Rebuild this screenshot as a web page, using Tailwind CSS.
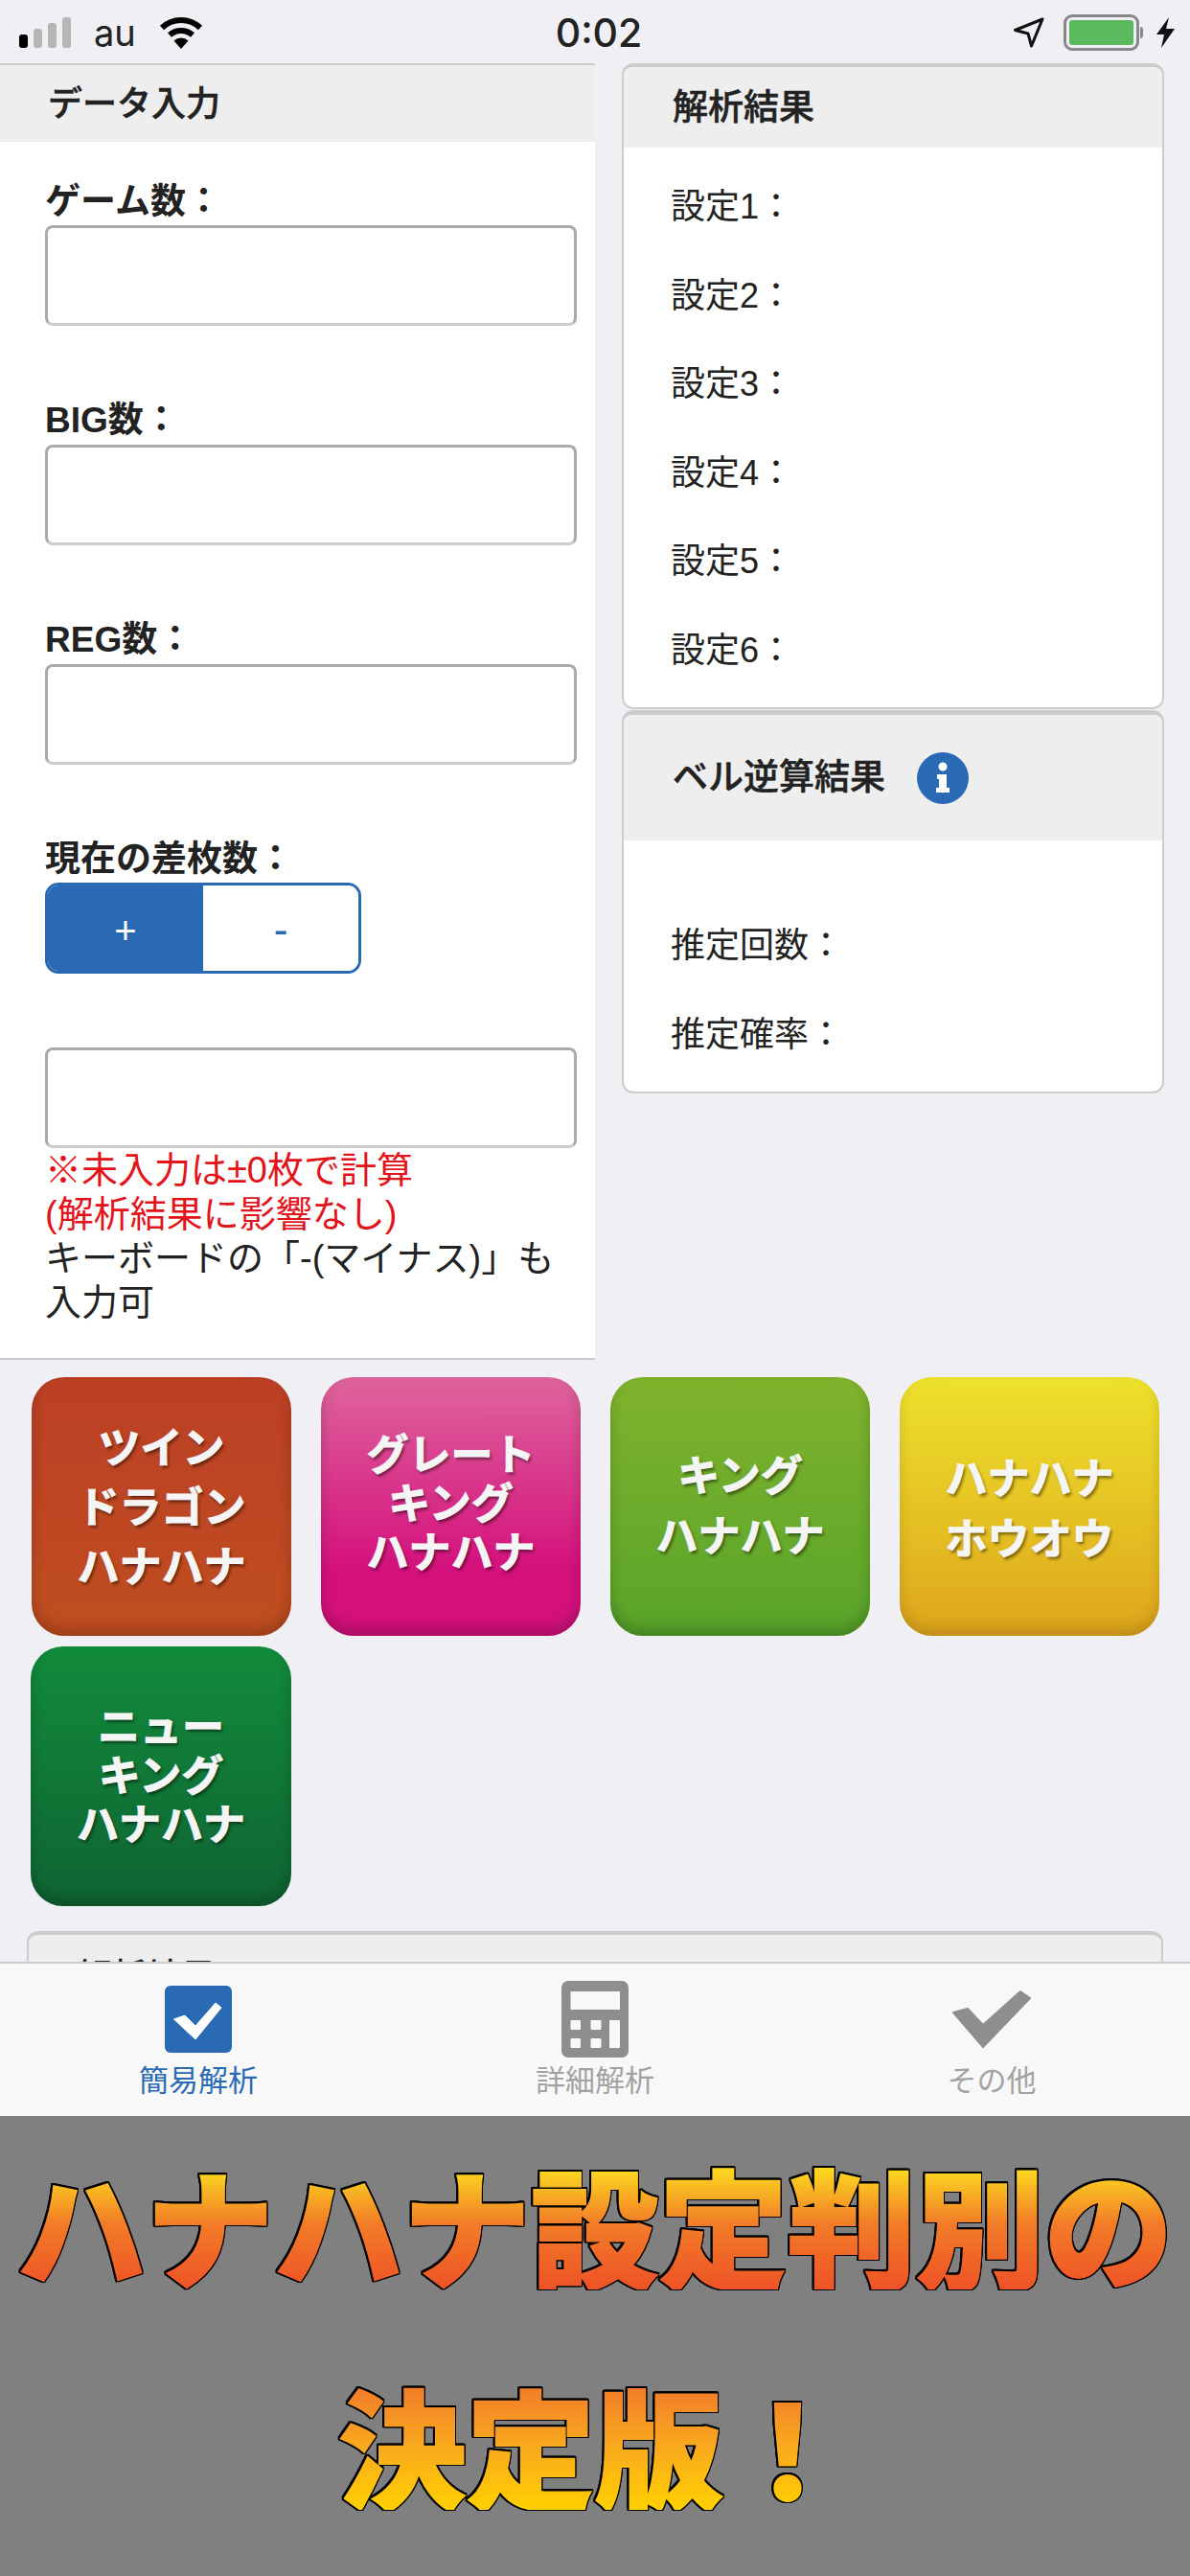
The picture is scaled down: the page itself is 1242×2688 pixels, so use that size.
<!DOCTYPE html>
<html lang="ja">
<head>
  <meta charset="UTF-8" />
  <title>ハナハナ設定判別</title>
  <meta name="viewport" content="width=device-width, initial-scale=1.0">
  <script src="https://cdn.jsdelivr.net/npm/@tailwindcss/browser@4"></script>
</head>
<body class="bg-[#efeff4] font-['Liberation_Sans','Noto_Sans_CJK_JP',sans-serif] text-[#222]">
<div class="w-[1242px] h-[2688px] flex flex-col overflow-hidden">

  <!-- status bar -->
  <div class="h-[66px] shrink-0 grid grid-cols-3 items-center pt-[2px]">
    <div class="flex items-center pl-[20px]">
      <div class="flex items-end gap-[6px] h-[32px]">
        <div class="w-[9px] h-[14px] rounded-[3px] bg-black"></div>
        <div class="w-[9px] h-[20px] rounded-[3px] bg-[#b5b5b5]"></div>
        <div class="w-[9px] h-[26px] rounded-[3px] bg-[#b5b5b5]"></div>
        <div class="w-[9px] h-[32px] rounded-[3px] bg-[#b5b5b5]"></div>
      </div>
      <span class="ml-[24px] text-[38px] leading-none font-['Inter',sans-serif]">au</span>
      <svg class="ml-[24px]" width="46" height="33" viewBox="0 0 46 33">
        <path d="M3 11A29 29 0 0 1 43 11" fill="none" stroke="#000" stroke-width="6"/>
        <path d="M11 18.5A18 18 0 0 1 35 18.5" fill="none" stroke="#000" stroke-width="6"/>
        <path d="M23 33L15.5 24.5A11 11 0 0 1 30.5 24.5Z" fill="#000"/>
      </svg>
    </div>
    <div class="text-center pl-[8px] text-[41px] leading-none font-medium font-['Inter',sans-serif]">0:02</div>
    <div class="flex items-center justify-end pr-[16px]">
      <svg width="32" height="32" viewBox="0 0 32 32">
        <path d="M30 2L1.5 13.5L15 17L18.5 30Z" fill="none" stroke="#111" stroke-width="3" stroke-linejoin="round"/>
      </svg>
      <div class="ml-[20px] w-[79px] h-[38px] border-[3px] border-[#888] rounded-[9px] p-[3px]">
        <div class="w-full h-full bg-[#5cb85c] rounded-[3px]"></div>
      </div>
      <div class="w-[3px] h-[12px] bg-[#888] rounded-r-[3px] ml-[1px]"></div>
      <svg class="ml-[14px]" width="19" height="32" viewBox="0 0 19 32">
        <path d="M13 0L0 18H8L5 32L19 12H10Z" fill="#111"/>
      </svg>
    </div>
  </div>

  <!-- scrolling content, clipped by the tab bar -->
  <div class="h-[981px] grow overflow-hidden">
    <div class="flex items-start">

      <!-- data input -->
      <div class="w-[621px] bg-white border-t-2 border-b-2 border-[#ccc] shrink-0">
        <div class="h-[80px] bg-[#eeeeee] flex items-center pl-[50px] pt-[2px] text-[36px] font-medium [-webkit-text-stroke:0.5px_#222]">データ入力</div>
        <div class="pt-[40px] pb-[35px] px-[47px]">
          <div class="h-[46px] mb-[1px] text-[37px] leading-[46px] font-bold">ゲーム数：</div>
          <input type="text" class="block w-[555px] h-[105px] mb-[76px] bg-white border-[3px] border-[#aaa] border-b-[#ccc] rounded-lg" />
          <div class="h-[46px] mb-[2px] text-[37px] leading-[46px] font-bold">BIG数：</div>
          <input type="text" class="block w-[555px] h-[105px] mb-[76px] bg-white border-[3px] border-[#aaa] border-b-[#ccc] rounded-lg" />
          <div class="h-[46px] mb-[2px] text-[37px] leading-[46px] font-bold">REG数：</div>
          <input type="text" class="block w-[555px] h-[105px] mb-[76px] bg-white border-[3px] border-[#aaa] border-b-[#ccc] rounded-lg" />
          <div class="h-[46px] mb-[1px] text-[37px] leading-[46px] font-bold">現在の差枚数：</div>
          <div class="w-[330px] h-[95px] flex border-[3px] border-[#2a6ab5] rounded-[14px] overflow-hidden mb-[77px]">
            <div class="w-[162px] bg-[#2a6ab5] text-white flex items-center justify-center text-[40px] pt-[4px]">+</div>
            <div class="grow bg-white text-[#2a6ab5] flex items-center justify-center text-[44px] pt-[2px]">-</div>
          </div>
          <input type="text" class="block w-[555px] h-[105px] bg-white border-[3px] border-[#aaa] border-b-[#ccc] rounded-lg" />
          <div class="text-[38px] leading-[46px] text-[#e3131b] whitespace-nowrap">※未入力は±0枚で計算<br>(解析結果に影響なし)</div>
          <div class="text-[38px] leading-[46px] whitespace-nowrap">キーボードの「-(マイナス)」も<br>入力可</div>
        </div>
      </div>

      <!-- results -->
      <div class="w-[566px] ml-[28px] shrink-0">
        <div class="bg-white border-2 border-t-4 border-[#ccc] rounded-xl overflow-hidden">
          <div class="h-[84px] bg-[#eeeeee] flex items-center pl-[51px] pt-[1px] text-[37px] font-medium [-webkit-text-stroke:0.5px_#222]">解析結果</div>
          <div class="pt-[16px] pb-[13px] pl-[49px] text-[36px] leading-[92.5px]">
            <div>設定1：</div>
            <div>設定2：</div>
            <div>設定3：</div>
            <div>設定4：</div>
            <div>設定5：</div>
            <div>設定6：</div>
          </div>
        </div>
        <div class="mt-[1px] bg-white border-2 border-t-[5px] border-[#ccc] rounded-xl overflow-hidden">
          <div class="h-[131px] bg-[#eeeeee] flex items-center pl-[51px] text-[37px] font-medium [-webkit-text-stroke:0.5px_#222]">
            ベル逆算結果
            <svg class="ml-[33px]" width="54" height="54" viewBox="0 0 54 54">
              <circle cx="27" cy="27" r="27" fill="#2a6ab5"/>
              <circle cx="27" cy="15" r="4.5" fill="#fff"/>
              <path d="M21 23H31V37H34V42H20V37H23V28H21Z" fill="#fff"/>
            </svg>
          </div>
          <div class="pt-[64px] pb-[13px] pl-[49px] text-[36px] leading-[92.5px]">
            <div>推定回数：</div>
            <div>推定確率：</div>
          </div>
        </div>
      </div>
    </div>

    <!-- machine buttons -->
    <div class="grid grid-cols-[repeat(4,271px)] gap-x-[31px] gap-y-[11px] pl-[33px] pt-[18px] text-center text-[#f5f5f5] text-[44px] font-bold [-webkit-text-stroke:1px_#f5f5f5] [text-shadow:2px_3px_3px_rgba(0,0,0,0.45)]">
      <div class="h-[270px] rounded-[34px] flex items-center justify-center leading-[62px] pt-[3px] bg-[linear-gradient(#bb3f26,#c04e1f)] shadow-[inset_0_-8px_14px_rgba(0,0,0,0.2)]">ツイン<br>ドラゴン<br>ハナハナ</div>
      <div class="h-[270px] rounded-[34px] flex items-center justify-center leading-[51px] pb-[5px] bg-[linear-gradient(#de649c,#d4107c_75%)] shadow-[inset_0_-8px_14px_rgba(0,0,0,0.2)]">グレート<br>キング<br>ハナハナ</div>
      <div class="h-[270px] rounded-[34px] flex items-center justify-center leading-[63px] bg-[linear-gradient(#80b32c,#58a42a)] shadow-[inset_0_-8px_14px_rgba(0,0,0,0.2)]">キング<br>ハナハナ</div>
      <div class="h-[270px] rounded-[34px] flex items-center justify-center leading-[63px] pt-[6px] bg-[linear-gradient(#ede22c,#dea51c)] shadow-[inset_0_-8px_14px_rgba(0,0,0,0.14)]">ハナハナ<br>ホウオウ</div>
      <div class="h-[271px] -ml-[1px] rounded-[34px] flex items-center justify-center leading-[51px] bg-[linear-gradient(#128b3b,#0f6433)] shadow-[inset_0_-8px_14px_rgba(0,0,0,0.2)]">ニュー<br>キング<br>ハナハナ</div>
    </div>

    <!-- next card, cut off by the tab bar -->
    <div class="mt-[26px] ml-[28px] w-[1186px] h-[200px] border-2 border-t-4 border-[#ccc] rounded-xl bg-[#eeeeee] pt-[17px] pl-[51px] text-[36px] font-medium">解析結果</div>
  </div>

  <!-- tab bar -->
  <div class="h-[161px] shrink-0 bg-[#f8f8f8] border-t-2 border-[#ccc] grid grid-cols-3 pt-[18px] text-[31px] leading-[40px] text-[#a2a2a2]">
    <div class="flex flex-col items-center text-[#2a6ab5]">
      <div class="h-[80px] flex items-center">
        <svg width="70" height="70" viewBox="0 0 70 70">
          <rect width="70" height="70" rx="6" fill="#2a6ab5"/>
          <path d="M9.5 35L21 31L32 42L53 18L59 23L32 56Z" fill="#fff" stroke="#fff" stroke-width="1" stroke-linejoin="round"/>
        </svg>
      </div>
      <div class="mt-[5px]">簡易解析</div>
    </div>
    <div class="flex flex-col items-center">
      <div class="h-[80px] flex items-center">
        <svg width="70" height="80" viewBox="0 0 70 80">
          <rect width="70" height="80" rx="7" fill="#8e8e8e"/>
          <g fill="#f8f8f8">
            <rect x="9.5" y="11" width="51.5" height="19"/>
            <rect x="9.5" y="41" width="10.5" height="10" rx="1"/>
            <rect x="30.5" y="41" width="11" height="10" rx="1"/>
            <rect x="50" y="41" width="11" height="29" rx="1"/>
            <rect x="9.5" y="60" width="10.5" height="10" rx="1"/>
            <rect x="30.5" y="60" width="11" height="10" rx="1"/>
          </g>
        </svg>
      </div>
      <div class="mt-[5px]">詳細解析</div>
    </div>
    <div class="flex flex-col items-center">
      <div class="h-[80px] flex items-center">
        <svg width="82" height="60" viewBox="0 0 82 60">
          <path d="M1 23L16 19L32 36L71 1L81 8L32 59Z" fill="#8e8e8e" stroke="#8e8e8e" stroke-width="2" stroke-linejoin="round"/>
        </svg>
      </div>
      <div class="mt-[5px]">その他</div>
    </div>
  </div>

  <!-- banner -->
  <div class="h-[480px] shrink-0 bg-[#808080] flex flex-col items-center gap-[92px] pt-[43px] text-[134px] leading-[138px] font-black whitespace-nowrap font-['Noto_Sans_CJK_JP',sans-serif]">
    <div class="px-[8px] bg-[linear-gradient(#ffee1e,#f27c28_50%,#ee5227)] bg-clip-text text-transparent [-webkit-text-stroke:2px_transparent] [filter:drop-shadow(1.5px_0_0_#000)_drop-shadow(-1.5px_0_0_#000)_drop-shadow(0_1.5px_0_#000)_drop-shadow(0_-1.5px_0_#000)]">ハナハナ設定判別の</div>
    <div class="px-[8px] bg-[linear-gradient(#f0742a,#f9a81f_50%,#ffd000)] bg-clip-text text-transparent [-webkit-text-stroke:2px_transparent] [filter:drop-shadow(1.5px_0_0_#000)_drop-shadow(-1.5px_0_0_#000)_drop-shadow(0_1.5px_0_#000)_drop-shadow(0_-1.5px_0_#000)]">決定版！</div>
  </div>
</div>
</body>
</html>
